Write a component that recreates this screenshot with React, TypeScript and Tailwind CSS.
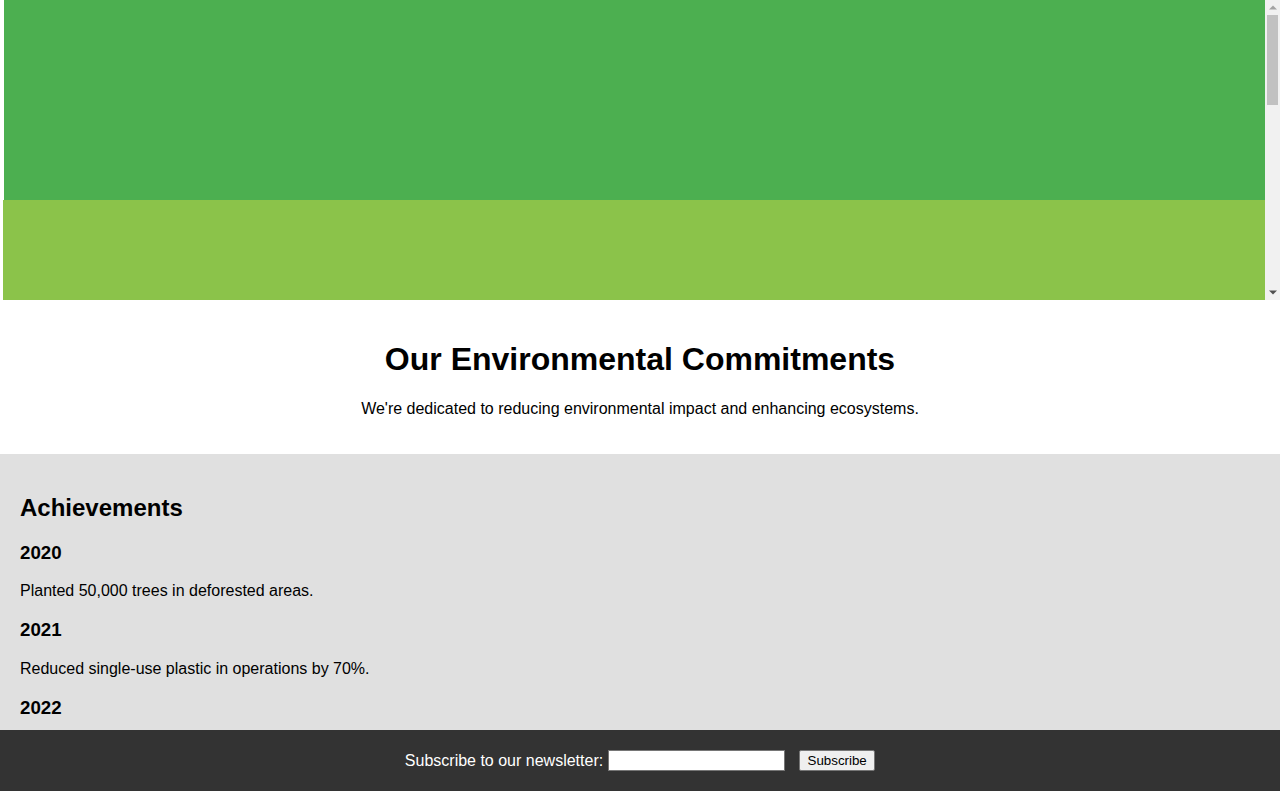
export default function App() {
  return (
    <div
      className="relative h-screen overflow-hidden bg-white text-black"
      style={{ fontFamily: '"Liberation Sans", Arial, sans-serif' }}
    >
      <div className="h-[300px] flex">
        <div className="flex-1 overflow-hidden">
          <div className="h-[200px] ml-[4px] bg-[#4caf50]" />
          <div className="h-[100px] ml-[3px] bg-[#8bc34a]" />
        </div>
        <div className="w-[15px] h-[300px] bg-[#f1f1f1] flex flex-col items-center">
          <div className="h-[15px] w-full flex items-center justify-center">
            <svg width="8" height="5" viewBox="0 0 8 5">
              <polygon points="0,4.5 4,0.5 8,4.5" fill="#a3a3a3" />
            </svg>
          </div>
          <div className="w-[11px] h-[90px] bg-[#c1c1c1]" />
          <div className="flex-1" />
          <div className="h-[15px] w-full flex items-center justify-center">
            <svg width="8" height="5" viewBox="0 0 8 5">
              <polygon points="0,0.5 8,0.5 4,4.5" fill="#505050" />
            </svg>
          </div>
        </div>
      </div>

      <section className="p-[20px] text-center">
        <h1 className="text-[32px] font-bold leading-[normal] my-[21.44px]">
          Our Environmental Commitments
        </h1>
        <p className="text-[16px] leading-[normal] my-[16px]">
          We're dedicated to reducing environmental impact and enhancing ecosystems.
        </p>
      </section>

      <section className="p-[20px] bg-[#e0e0e0]">
        <h2 className="text-[24px] font-bold leading-[normal] my-[19.92px]">Achievements</h2>
        <h3 className="text-[18.72px] font-bold leading-[normal] my-[18.72px]">2020</h3>
        <p className="text-[16px] leading-[normal] my-[16px]">Planted 50,000 trees in deforested areas.</p>
        <h3 className="text-[18.72px] font-bold leading-[normal] my-[18.72px]">2021</h3>
        <p className="text-[16px] leading-[normal] my-[16px]">Reduced single-use plastic in operations by 70%.</p>
        <h3 className="text-[18.72px] font-bold leading-[normal] my-[18.72px]">2022</h3>
        <p className="text-[16px] leading-[normal] my-[16px]">Switched to 100% renewable energy in all facilities.</p>
      </section>

      <footer className="fixed bottom-0 left-0 right-0 h-[61px] bg-[#333333] text-white flex items-center justify-center">
        <span className="text-[16px] leading-[normal] mr-[5px]">Subscribe to our newsletter:</span>
        <input
          type="email"
          className="w-[177px] h-[21px] bg-white border border-[#767676] text-black text-[13px] px-[2px] outline-none"
        />
        <button className="ml-[14px] w-[76px] h-[21px] bg-[#efefef] border border-[#767676] rounded-[2px] text-black text-[13.33px] leading-[normal]">
          Subscribe
        </button>
      </footer>
    </div>
  );
}
